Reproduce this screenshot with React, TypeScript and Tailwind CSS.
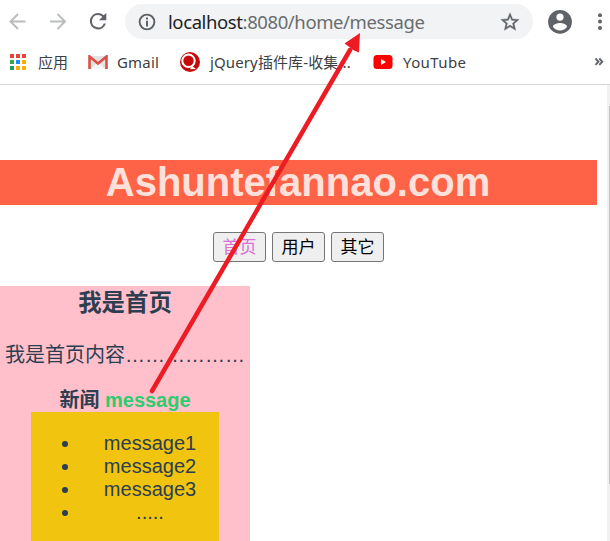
import React from "react";

const uiFont = "font-['Noto_Sans','Noto_Sans_CJK_SC',sans-serif]";

const appColors = [
  "bg-[#ea4335]", "bg-[#ea4335]", "bg-[#ea4335]",
  "bg-[#34a853]", "bg-[#1a8cff]", "bg-[#fbaf05]",
  "bg-[#1fa055]", "bg-[#fbaf05]", "bg-[#fbaf05]",
];

function Toolbar() {
  return (
    <div className="flex h-[43px] items-center pl-[5px]">
      <svg className="mr-[16px] h-6 w-6 shrink-0" viewBox="0 0 24 24" fill="none" stroke="#babcbe" strokeWidth="2">
        <path d="M20.500 11.500H6M13 4 5.500 11.500l7.500 7.500" />
      </svg>
      <svg className="mr-[17px] h-6 w-6 shrink-0" viewBox="0 0 24 24" fill="none" stroke="#babcbe" strokeWidth="2">
        <path d="M5 11.500h14.500M12.500 4 20 11.500l-7.500 7.500" />
      </svg>
      <svg className="h-6 w-6 shrink-0" viewBox="0 0 24 24" fill="#5f6368">
        <path d="M17.650 5.350A7.960 7.960 0 0 0 12 3a8.200 8.200 0 1 0 7.930 10.500h-2.180A6.100 6.100 0 1 1 12 5.100c1.660 0 3.140.69 4.220 1.780L13 10.200h7.300V3z" />
      </svg>
      <div className="ml-[15px] flex h-[35px] w-[408px] shrink-0 items-center rounded-full bg-[#f1f3f4] pl-[12px] pr-[12px]">
        <svg className="h-5 w-5 shrink-0" viewBox="0 0 24 24" fill="#5f6368">
          <path d="M10.800 6.500h2.400v2.400h-2.400zm0 4h2.400v7h-2.400zm1.200-8.500a10 10 0 1 0 0 20 10 10 0 0 0 0-20zm0 17.700a7.700 7.700 0 1 1 0-15.400 7.700 7.700 0 0 1 0 15.400z" />
        </svg>
        <span className="ml-[11px] whitespace-nowrap text-[18.500px] leading-[35px] tracking-[-0.4px] text-[#202124]">
          localhost<span className="text-[#6a6d70]">:8080/home/message</span>
        </span>
        <svg className="ml-auto h-[22px] w-[22px] shrink-0" viewBox="0 0 24 24" fill="#5f6368" stroke="#5f6368" strokeWidth="0.400">
          <path d="m22 9.240-7.190-.62L12 2 9.190 8.630 2 9.240l5.460 4.730L5.820 21 12 17.270 18.180 21l-1.630-7.030L22 9.240zM12 15.400l-3.760 2.270 1-4.280-3.320-2.880 4.380-.38L12 6.100l1.710 4.040 4.380.38-3.320 2.880 1 4.280L12 15.400z" />
        </svg>
      </div>
      <svg className="ml-[13px] h-7 w-7 shrink-0" viewBox="0 0 24 24" fill="#5f6368">
        <path d="M12 1.700a10.200 10.200 0 1 0 0 20.400 10.200 10.200 0 0 0 0-20.400zm0 3a3 3 0 1 1 0 6.200 3 3 0 0 1 0-6.200zm0 14.500a7.200 7.200 0 0 1-6-3.220c.03-1.990 4-3.080 6-3.080s5.970 1.090 6 3.080a7.200 7.200 0 0 1-6 3.220z" />
      </svg>
      <svg className="ml-[22px] h-6 w-[8px] shrink-0" viewBox="0 0 8 24" fill="#5f6368">
        <circle cx="4" cy="5.300" r="2" />
        <circle cx="4" cy="11.600" r="2" />
        <circle cx="4" cy="17.900" r="2" />
      </svg>
    </div>
  );
}

function Bookmarks() {
  return (
    <div className="flex h-[42px] items-center border-b border-[#d5d6da] pb-[3px] pl-[10px] text-[15px] leading-[22px] text-[#3c4043]">
      <div className="grid w-4 shrink-0 grid-cols-3 gap-[2px]">
        {appColors.map((c, i) => (
          <span key={i} className={`h-1 w-1 ${c}`} />
        ))}
      </div>
      <span className="ml-[12px] w-[30px] shrink-0 whitespace-nowrap">应用</span>
      <svg className="ml-[20px] h-[14px] w-5 shrink-0" viewBox="0 0 20 14">
        <path d="M2 1h16v13H2z" fill="#e2e2e2" />
        <path d="m3 14 6-6h2l6 6z" fill="#f5f5f5" />
        <path d="M1.500 14V1.500L10 8.500l8.500-7V14" fill="none" stroke="#da5047" strokeWidth="2.600" />
      </svg>
      <span className="ml-[9px] w-[42px] shrink-0 whitespace-nowrap tracking-[0.2px]">Gmail</span>
      <svg className="ml-[21px] h-5 w-5 shrink-0" viewBox="0 0 20 20">
        <circle cx="10" cy="10" r="10" fill="#c40a0a" />
        <circle cx="8.500" cy="8.800" r="6.200" fill="none" stroke="#fff" strokeWidth="2" />
        <path d="M0 4.500A10 10 0 0 0 5 19.500" fill="none" stroke="#fff" strokeWidth="1.200" />
        <path d="m12 14 4 3-6 .3z" fill="#fff" />
      </svg>
      <span className="ml-[10px] w-[142px] shrink-0 whitespace-nowrap tracking-[0.12px]">jQuery插件库-收集...</span>
      <svg className="ml-[21px] h-[14px] w-5 shrink-0" viewBox="0 0 20 14">
        <rect x="0.500" width="19" height="14" rx="3.500" fill="#f00" />
        <path d="m8 4 5 3-5 3z" fill="#fff" />
      </svg>
      <span className="ml-[10px] shrink-0 whitespace-nowrap tracking-[0.4px]">YouTube</span>
      <svg className="ml-auto mr-[6px] h-3 w-[10px] shrink-0" viewBox="0 0 10 12" fill="none" stroke="#5f6368" strokeWidth="1.900">
        <path d="m1.500 2.500 3 3.200-3 3.200M5.300 2.500l3 3.200-3 3.200" />
      </svg>
    </div>
  );
}

function NavButton({ label, active = false }: { label: string; active?: boolean }) {
  return (
    <button className={`h-[30px] w-[53px] rounded-[3px] border border-[#767676] bg-[#efefef] pt-[2px] text-[17px] leading-[26px] ${active ? "text-[#da70d6]" : "text-black"}`}>
      {label}
    </button>
  );
}

function HomePanel() {
  return (
    <section className="flex h-[255px] w-[250px] flex-col items-center bg-[#ffc0cb] text-[20px] leading-[23px] text-[#2c3e50]">
      <h2 className="h-[34px] text-[23.400px] font-bold leading-[35px]">我是首页</h2>
      <p className="mt-[21px] h-[28px] whitespace-nowrap leading-[28px]">
        我是首页内容………………
      </p>
      <h4 className="mt-[17px] h-[26px] whitespace-nowrap font-bold leading-[28px]">
        新闻 <span className="text-[#2ecc71]">message</span>
      </h4>
      <ul className="h-[129px] w-[188px] bg-[#f1c40f] pl-[31px] pt-[20px]">
        {["message1", "message2", "message3", "....."].map((text) => (
          <li key={text} className="flex h-[23px] items-center">
            <span className="h-[6px] w-[6px] shrink-0 rounded-full bg-[#2c3e50]" />
            <span className="ml-[13px] w-[138px] text-center">{text}</span>
          </li>
        ))}
      </ul>
    </section>
  );
}

export default function App() {
  return (
    <div className="relative flex h-[541px] w-[610px] flex-col overflow-hidden bg-white">
      <header className={`h-[85px] shrink-0 ${uiFont}`}>
        <Toolbar />
        <Bookmarks />
      </header>
      <div className="flex min-h-0 flex-1">
        <main className="w-[597px] shrink-0 pt-[75px] font-['Liberation_Sans','Noto_Sans_CJK_SC',sans-serif]">
          <h1 className="h-[45px] bg-[#ff6347] pr-px text-center text-[40px] font-bold leading-[45px] text-[#ffe0da]">
            Ashuntefannao.com
          </h1>
          <nav className="mb-[24px] mt-[27px] flex justify-center gap-[6px]">
            <NavButton label="首页" active />
            <NavButton label="用户" />
            <NavButton label="其它" />
          </nav>
          <HomePanel />
        </main>
        <div className="ml-auto w-[3px] bg-[#f1f1f1] pl-[2px] pt-[21px]">
          <div className="h-[378px] bg-[#c1c1c1]" />
        </div>
      </div>
      <svg className="pointer-events-none absolute left-0 top-0 h-[541px] w-[610px]" viewBox="0 0 610 541">
        <path d="M152 391 350 50" stroke="#ed1c24" strokeWidth="4.500" strokeLinecap="round" />
        <path d="M360 33 344.500 43.500 350 47.500 353 50 359 52.500z" fill="#ed1c24" />
      </svg>
    </div>
  );
}
